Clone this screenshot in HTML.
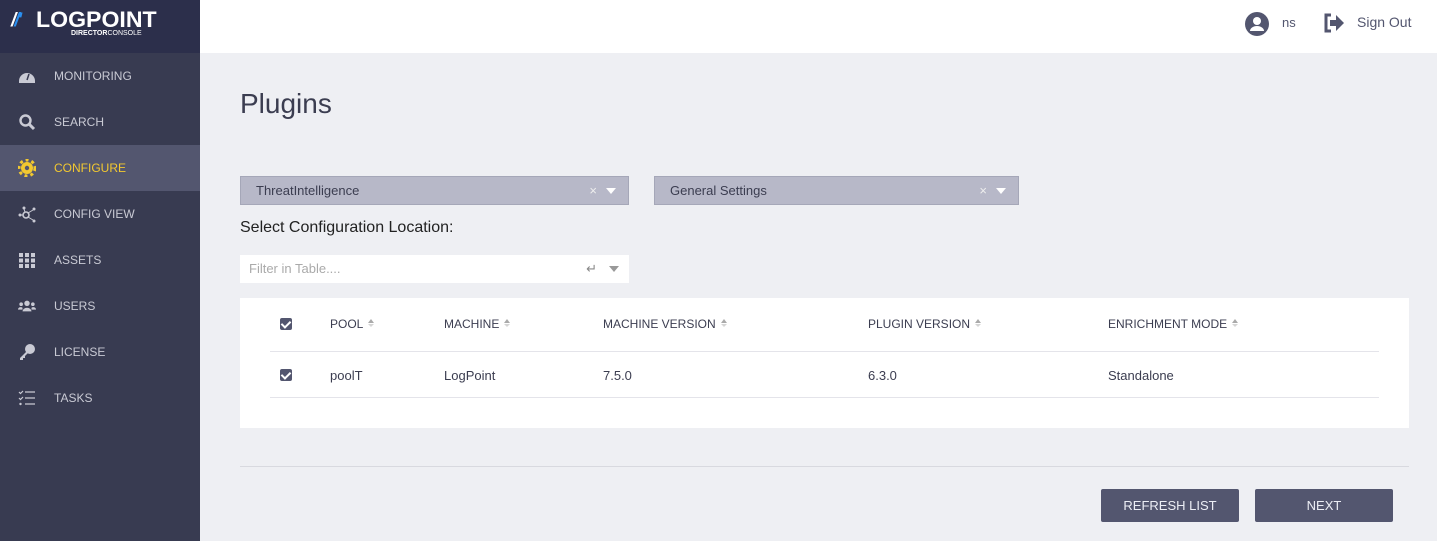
<!DOCTYPE html>
<html><head><style>
*{box-sizing:border-box;margin:0;padding:0}
body{width:1437px;height:541px;overflow:hidden;font-family:"Liberation Sans",sans-serif;background:#eeeff3;position:relative}
.side{position:absolute;left:0;top:0;width:200px;height:541px;background:#383b51}
.logo{height:53px;background:#2c2f4b;position:relative}
.nav{position:absolute;left:0;width:200px;height:46px;color:#c9cad4;font-size:12px;line-height:46px;padding-left:54px}
.nav.act{background:#53566f;color:#f2c830}
.ic{position:absolute;left:18px;top:14px;width:18px;height:18px}
.top{position:absolute;left:200px;top:0;right:0;height:53px;background:#fff}
.a{position:absolute}
.sel{position:absolute;top:176px;height:29px;background:#b7b8c8;border:1px solid #a5a7b8;font-size:13px;color:#3b3d50;line-height:27px;padding-left:15px}
.btn{position:absolute;top:489px;width:138px;height:33px;background:#53566f;border-radius:2px;color:#eceef5;font-size:13px;text-align:center;line-height:33px}
.hd{position:absolute;top:317px;font-size:12px;color:#3b3d50}
.cell{position:absolute;top:368px;font-size:13px;color:#3b3d50}
.cb{position:absolute;width:12px;height:12px;background:#53566f;border-radius:2px;left:280px}
.cb:after{content:"";position:absolute;left:3px;top:1px;width:4px;height:7px;border:solid #fff;border-width:0 2px 2px 0;transform:rotate(45deg)}
.ar{display:inline-block;width:7px;height:9px;margin-left:5px;vertical-align:0;position:relative}
.ar:before{content:"";position:absolute;left:0;top:0;border:3.5px solid transparent;border-bottom:4px solid #aaa;border-top:0}
.ar:after{content:"";position:absolute;left:0;top:5px;border:3.5px solid transparent;border-top:3px solid #d5d5d5;border-bottom:0}
.tri{position:absolute;width:0;height:0;border-left:5px solid transparent;border-right:5px solid transparent;border-top:6px solid #fff}
</style></head><body>
<div class="side">
<div class="logo">
<div class="a" style="left:11px;top:10px;font-weight:bold;font-size:19px;color:#fff;font-style:italic;letter-spacing:-2px">/<span style="color:#2a8ff0">/'</span></div>
<div class="a" style="left:36px;top:7px;font-weight:bold;font-size:22px;color:#fff;transform:scaleX(1.05);transform-origin:left">LOGPOINT</div>
<div class="a" style="left:71px;top:30px;font-size:7px;color:#fff"><b>DIRECTOR</b>CONSOLE</div>
</div>
<div class="nav" style="top:53px"><svg class="ic" viewBox="0 0 18 18"><path d="M1 14a8 8 0 0 1 16 0v2H1z" fill="#c9cad4"/><path d="M9 13l2-6" stroke="#383b51" stroke-width="1.5"/></svg>MONITORING</div>
<div class="nav" style="top:99px"><svg class="ic" viewBox="0 0 18 18"><circle cx="7.5" cy="7.5" r="5" stroke="#c9cad4" stroke-width="2.4" fill="none"/><path d="M11 11l5 5" stroke="#c9cad4" stroke-width="3"/></svg>SEARCH</div>
<div class="nav act" style="top:145px"><svg class="ic" viewBox="0 0 18 18"><circle cx="9" cy="9" r="6" fill="#f2c830"/><circle cx="9" cy="9" r="8" stroke="#f2c830" stroke-width="3" stroke-dasharray="3 3" fill="none"/><circle cx="9" cy="9" r="2.2" fill="#53566f"/></svg>CONFIGURE</div>
<div class="nav" style="top:191px"><svg class="ic" viewBox="0 0 18 18"><circle cx="2" cy="10" r="1.5" fill="#c9cad4"/><circle cx="8" cy="10" r="3" stroke="#c9cad4" stroke-width="1.6" fill="none"/><circle cx="16" cy="4" r="1.5" fill="#c9cad4"/><circle cx="16" cy="16" r="1.5" fill="#c9cad4"/><circle cx="6" cy="3" r="1.5" fill="#c9cad4"/><path d="M3 10h2M10 8l5-3M10 12l5 3M7 7L6 4" stroke="#c9cad4"/></svg>CONFIG VIEW</div>
<div class="nav" style="top:237px"><svg class="ic" viewBox="0 0 18 18" fill="#c9cad4"><rect x="1" y="2" width="4" height="4"/><rect x="7" y="2" width="4" height="4"/><rect x="13" y="2" width="4" height="4"/><rect x="1" y="7.5" width="4" height="4"/><rect x="7" y="7.5" width="4" height="4"/><rect x="13" y="7.5" width="4" height="4"/><rect x="1" y="13" width="4" height="4"/><rect x="7" y="13" width="4" height="4"/><rect x="13" y="13" width="4" height="4"/></svg>ASSETS</div>
<div class="nav" style="top:283px"><svg class="ic" viewBox="0 0 20 18" fill="#c9cad4"><circle cx="10" cy="6" r="3"/><circle cx="3.5" cy="7" r="2"/><circle cx="16.5" cy="7" r="2"/><path d="M5 15a5 4 0 0 1 10 0z"/><path d="M0 13a3 3 0 0 1 5-2v2zM20 13a3 3 0 0 0-5-2v2z"/></svg>USERS</div>
<div class="nav" style="top:329px"><svg class="ic" viewBox="0 0 18 18" fill="#c9cad4"><circle cx="12" cy="6" r="5"/><path d="M9 8L2 15v2h3v-2h2v-2l4-4z"/></svg>LICENSE</div>
<div class="nav" style="top:375px"><svg class="ic" viewBox="0 0 18 18" stroke="#c9cad4" stroke-width="2"><path d="M7 3h10M7 9h10M7 15h10M1 3l1.5 1.5L5 2M1 9l1.5 1.5L5 8" fill="none" stroke-width="1.2"/><circle cx="2.5" cy="15" r="1.2" fill="#c9cad4" stroke="none"/></svg>TASKS</div>
</div>
<div class="top">
<svg class="a" style="left:1044px;top:11px" width="26" height="26" viewBox="0 0 26 26"><circle cx="13" cy="13" r="12" fill="#53566f"/><circle cx="13" cy="10" r="4" fill="#fff"/><path d="M6 20a7 5 0 0 1 14 0z" fill="#fff"/></svg>
<div class="a" style="left:1082px;top:15px;font-size:13px;color:#53566f">ns</div>
<svg class="a" style="left:1123px;top:13px" width="22" height="20" viewBox="0 0 22 20"><path d="M8 2H3v16h5" stroke="#53566f" stroke-width="3" fill="none"/><path d="M7 7h6V2l8 8-8 8v-5H7z" fill="#53566f"/></svg>
<div class="a" style="left:1157px;top:14px;font-size:14px;color:#53566f">Sign Out</div>
</div>
<div class="a" style="left:240px;top:88px;font-size:28px;color:#3b3d50">Plugins</div>
<div class="sel" style="left:240px;width:389px">ThreatIntelligence<span class="a" style="right:31px;top:0;color:#eee">×</span><div class="tri" style="right:12px;top:11px"></div></div>
<div class="sel" style="left:654px;width:365px">General Settings<span class="a" style="right:31px;top:0;color:#eee">×</span><div class="tri" style="right:12px;top:11px"></div></div>
<div class="a" style="left:240px;top:219px;font-size:16px;color:#222">Select Configuration Location:</div>
<div class="a" style="left:240px;top:255px;width:389px;height:28px;background:#fff;font-size:13px;color:#aaa;line-height:28px;padding-left:9px">Filter in Table....<span class="a" style="right:32px;top:0;color:#888">↵</span><div class="tri" style="right:10px;top:11px;border-top-color:#999"></div></div>
<div class="a" style="left:240px;top:298px;width:1169px;height:130px;background:#fff"></div>
<div class="cb" style="top:318px"></div>
<div class="hd" style="left:330px">POOL<span class="ar"></span></div>
<div class="hd" style="left:444px">MACHINE<span class="ar"></span></div>
<div class="hd" style="left:603px">MACHINE VERSION<span class="ar"></span></div>
<div class="hd" style="left:868px">PLUGIN VERSION<span class="ar"></span></div>
<div class="hd" style="left:1108px">ENRICHMENT MODE<span class="ar"></span></div>
<div class="a" style="left:270px;top:351px;width:1109px;height:1px;background:#e4e4ea"></div>
<div class="cb" style="top:369px"></div>
<div class="cell" style="left:330px">poolT</div>
<div class="cell" style="left:444px">LogPoint</div>
<div class="cell" style="left:603px">7.5.0</div>
<div class="cell" style="left:868px">6.3.0</div>
<div class="cell" style="left:1108px">Standalone</div>
<div class="a" style="left:270px;top:397px;width:1109px;height:1px;background:#e4e4ea"></div>
<div class="a" style="left:240px;top:466px;width:1169px;height:1px;background:#d8d9df"></div>
<div class="btn" style="left:1101px">REFRESH LIST</div>
<div class="btn" style="left:1255px">NEXT</div>
</body></html>
